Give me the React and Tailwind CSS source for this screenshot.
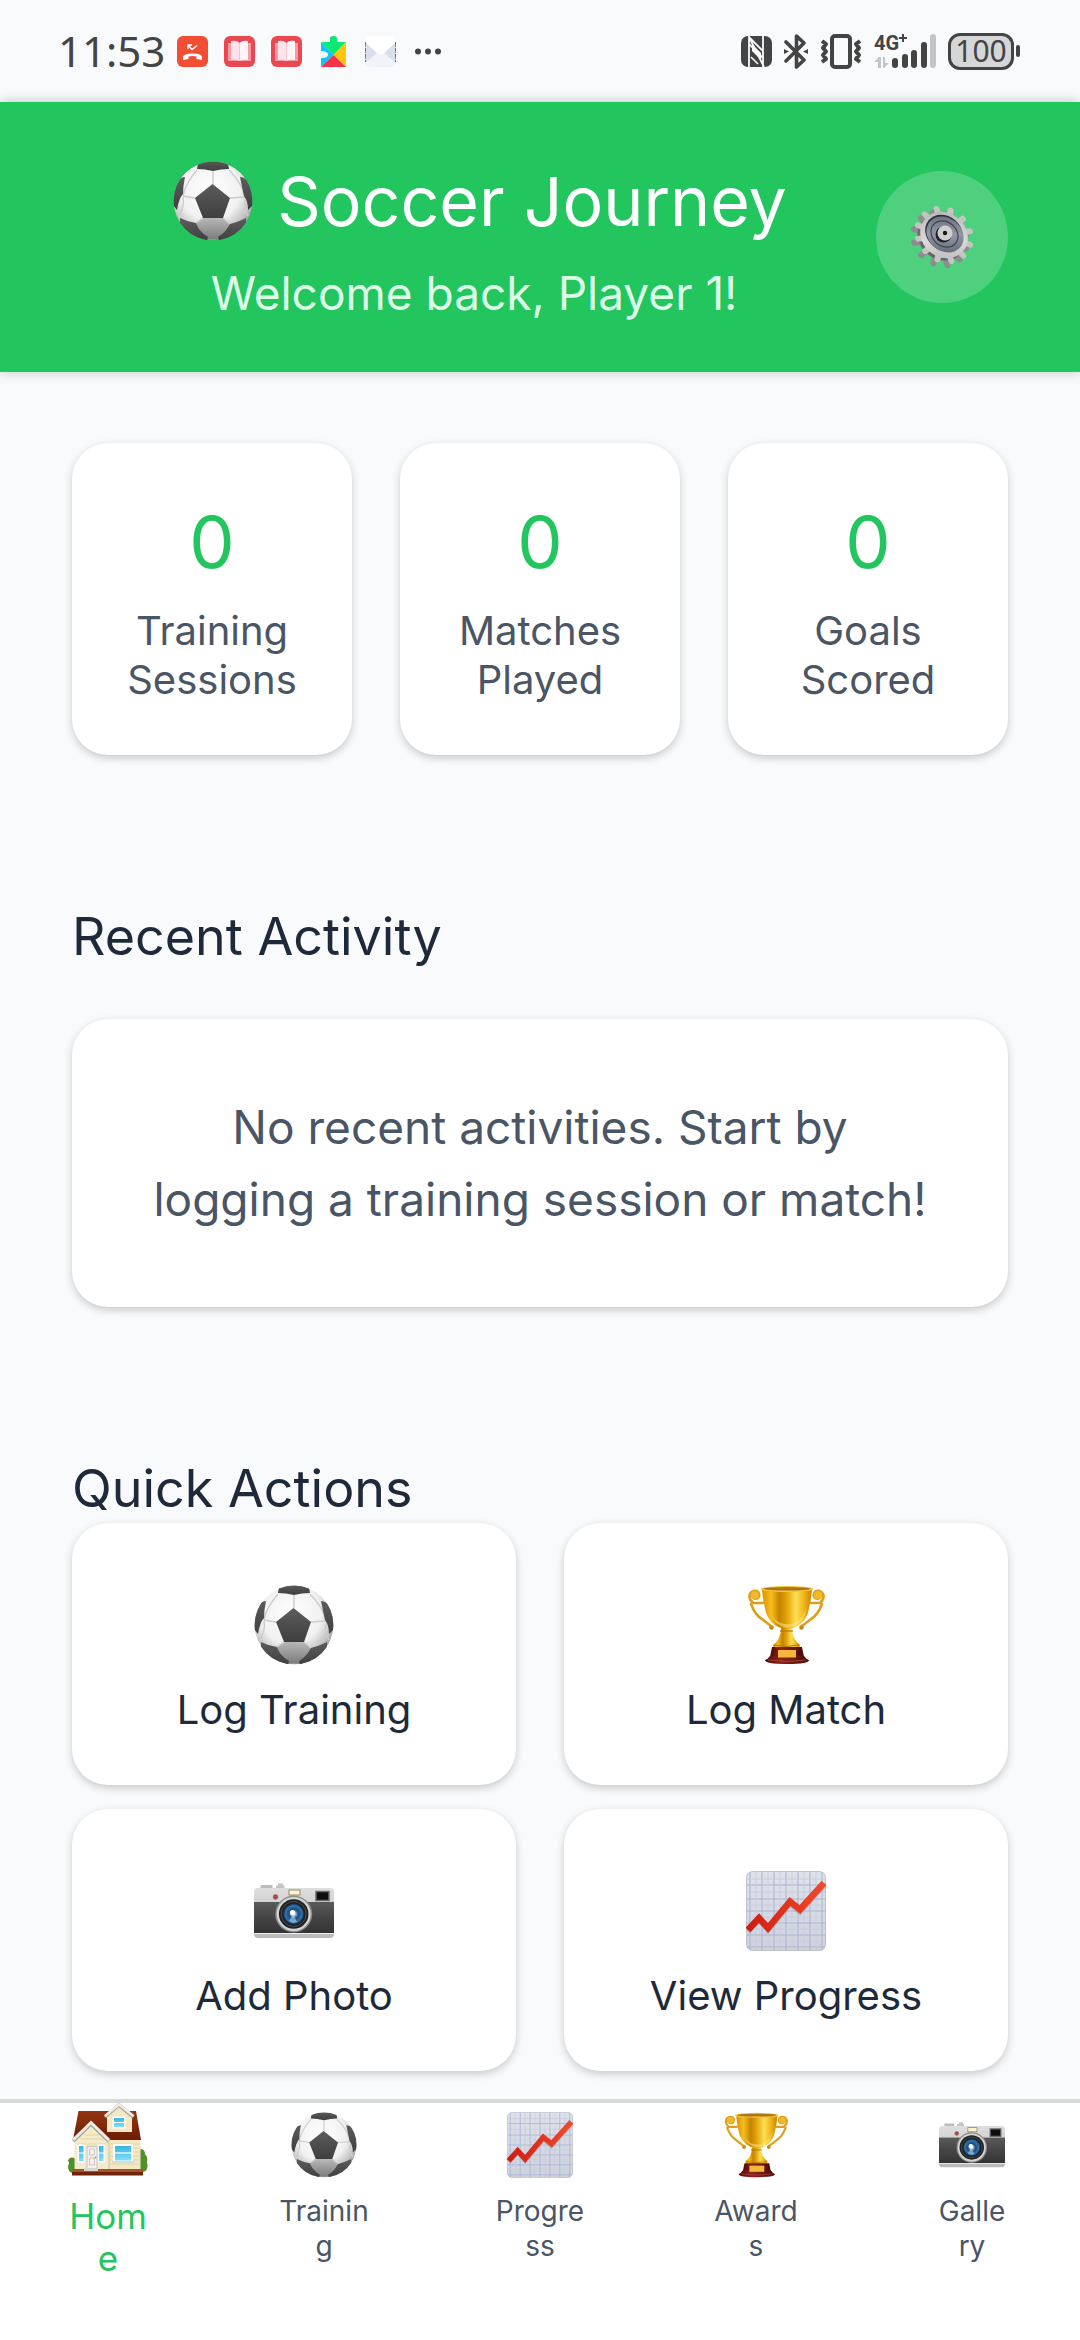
function SoccerIcon({ className }) {
  return (
    <svg viewBox="0 0 80 80" className={className} aria-hidden="true">
      <defs>
        <radialGradient id="ballSkin" cx="46%" cy="36%" r="64%">
          <stop offset="0" stopColor="#ffffff" />
          <stop offset="0.6" stopColor="#f1f1f1" />
          <stop offset="0.85" stopColor="#c2c2c2" />
          <stop offset="1" stopColor="#8c8c8c" />
        </radialGradient>
        <linearGradient id="ballPatch" x1="0" y1="0" x2="0" y2="1">
          <stop offset="0" stopColor="#5c5c5c" />
          <stop offset="1" stopColor="#3f3f3f" />
        </linearGradient>
        <linearGradient id="ballLow" x1="0" y1="0" x2="0" y2="1">
          <stop offset="0" stopColor="#b8b8b8" />
          <stop offset="1" stopColor="#7d7d7d" />
        </linearGradient>
        <clipPath id="ballClip">
          <circle cx="40" cy="40" r="39.5" />
        </clipPath>
      </defs>
      <g clipPath="url(#ballClip)">
        <circle cx="40" cy="40" r="39.5" fill="url(#ballSkin)" />
        <path d="M30 57H50L57 63L53 69L45 78H35L26 68L23 62Z" fill="url(#ballLow)" />
        <g fill="none" stroke="#cccccc" strokeWidth="1.4">
          <path d="M40 23V10M22 37L10 35M57 37L72 36M30 57L23 62M50 57L57 63" />
          <path d="M10 35Q12 23 24 9M72 35Q68 21 56 9M5 56Q12 46 10 36M75 55Q69 46 73 37" />
        </g>
        <g fill="url(#ballPatch)">
          <path d="M39.500 23L57 37L50 57H30L22 37Z" />
          <path d="M25 2Q40 -4 55 2L56 8Q48 8 40 10Q32 8 24 8Z" />
          <path d="M12 16Q10 25 10 33Q6 37 4 49L0 44Q0 28 5 20Q8 16 12 16Z" />
          <path d="M67 16Q69 26 71 35Q75 40 75 49L80 44Q80 28 75 20Q71 16 67 16Z" />
          <path d="M7 57Q15 61 23 62L26 68Q30 73 35 76L34 80Q15 76 7 64Z" />
          <path d="M73 57Q65 61 57 63L53 69Q50 73 45 76L46 80Q65 76 73 64Z" />
        </g>
      </g>
    </svg>
  );
}

function TrophyIcon({ className }) {
  return (
    <svg viewBox="0 0 80 80" className={className} aria-hidden="true">
      <defs>
        <linearGradient id="cupGold" x1="0" y1="0" x2="1" y2="0">
          <stop offset="0" stopColor="#d98f00" />
          <stop offset="0.18" stopColor="#f6bd1c" />
          <stop offset="0.35" stopColor="#c48400" />
          <stop offset="0.5" stopColor="#e5a50a" />
          <stop offset="0.68" stopColor="#ffdf55" />
          <stop offset="0.85" stopColor="#efb113" />
          <stop offset="1" stopColor="#c98300" />
        </linearGradient>
        <linearGradient id="cupBase" x1="0" y1="0" x2="1" y2="0">
          <stop offset="0" stopColor="#4c0808" />
          <stop offset="0.35" stopColor="#8f2418" />
          <stop offset="1" stopColor="#4c0808" />
        </linearGradient>
      </defs>
      <g fill="none" stroke="#dea01a" strokeWidth="2.600" strokeLinecap="round">
        <path d="M17 18H7Q2 13 4 9Q6 5 11 6Q15 9 12 13Q8 15 6 11" />
        <path d="M5 19Q9 30 16 34L25 41" />
        <path d="M65 18H74Q79 13 77 9Q75 5 70 6Q66 9 69 13Q73 15 75 11" />
        <path d="M76 19Q72 30 65 34L56 41" />
      </g>
      <circle cx="9" cy="10" r="4" fill="#f0b82c" />
      <circle cx="72" cy="10" r="4" fill="#f0b82c" />
      <circle cx="25.500" cy="42.500" r="2.300" fill="#c88a10" />
      <circle cx="55.500" cy="42.500" r="2.300" fill="#c88a10" />
      <path d="M35 43H46Q46 54 54 60Q54 63 50 63H31Q27 63 27 60Q35 54 35 43Z" fill="url(#cupGold)" />
      <path d="M28 60Q40 63 53 60" stroke="#b87900" fill="none" />
      <path d="M34 46H47" stroke="#b87900" strokeWidth="1.200" />
      <path d="M16 5H66Q65 16 62 28Q56 43 41 44Q26 43 20 28Q17 16 16 5Z" fill="url(#cupGold)" />
      <ellipse cx="41" cy="4" rx="26.500" ry="3" fill="#f7c53a" />
      <ellipse cx="41" cy="3.800" rx="23.500" ry="1.800" fill="#a97714" />
      <path d="M25 30Q33 41 46 39Q56 36 60 23Q59 41 41 43Q30 41 25 30Z" fill="#ffe98a" opacity="0.500" />
      <path d="M26 62H56L58 72H24Z" fill="url(#cupBase)" />
      <path d="M24 71H58Q60 74 63 75Q63 79 41 79Q19 79 19 75Q22 74 24 71Z" fill="url(#cupBase)" />
      <path d="M22 75Q41 78 60 75" stroke="#a94b3e" fill="none" strokeWidth="0.800" />
      <rect x="32" y="65" width="18" height="7.500" fill="#f4b73c" />
    </svg>
  );
}

function CameraIcon({ className }) {
  return (
    <svg viewBox="0 0 80 80" className={className} aria-hidden="true">
      <defs>
        <linearGradient id="camSilver" x1="0" y1="0" x2="0" y2="1">
          <stop offset="0" stopColor="#dedede" />
          <stop offset="1" stopColor="#b9b9b9" />
        </linearGradient>
        <linearGradient id="camLeather" x1="0" y1="0" x2="0" y2="1">
          <stop offset="0" stopColor="#5a5a5a" />
          <stop offset="0.500" stopColor="#454545" />
          <stop offset="1" stopColor="#333333" />
        </linearGradient>
        <radialGradient id="camGlass">
          <stop offset="0" stopColor="#ffffff" />
          <stop offset="0.200" stopColor="#8fb8dc" />
          <stop offset="0.450" stopColor="#1d4a78" />
          <stop offset="0.800" stopColor="#2f73ad" />
          <stop offset="1" stopColor="#12263c" />
        </radialGradient>
      </defs>
      <rect x="6.500" y="14" width="12" height="4" rx="1" fill="#bcbcbc" />
      <path d="M22 18V14.500H24V12.500H29V14.500H30.500V18Z" fill="#c4c4c4" />
      <rect x="0" y="17" width="80" height="50" rx="4" fill="url(#camSilver)" />
      <rect x="0" y="31" width="80" height="31" fill="url(#camLeather)" />
      <rect x="0" y="62" width="80" height="1" fill="#f1f1f1" />
      <rect x="35" y="19" width="11" height="5" fill="#fff3cf" stroke="#7b745f" strokeWidth="0.800" />
      <rect x="62" y="20.500" width="13" height="9" fill="#0e0e0e" stroke="#6b6b6b" strokeWidth="1.500" />
      <circle cx="21.500" cy="26" r="2.400" fill="#b8403c" stroke="#777777" strokeWidth="0.700" />
      <circle cx="39.700" cy="43" r="18.500" fill="#8d8d8d" />
      <circle cx="39.700" cy="43" r="17" fill="#d5d5d5" />
      <circle cx="39.700" cy="43" r="14.800" fill="#202224" />
      <circle cx="39.700" cy="43" r="12.500" fill="none" stroke="#505558" strokeWidth="0.800" />
      <circle cx="39.700" cy="43" r="10.500" fill="url(#camGlass)" />
      <path d="M39 43L43 51Q38 53 35 50Z" fill="#b7d5ee" opacity="0.600" />
      <circle cx="38.500" cy="41.500" r="2.600" fill="#ffffff" />
    </svg>
  );
}

function ChartIcon({ className }) {
  return (
    <svg viewBox="0 0 80 80" className={className} aria-hidden="true">
      <defs>
        <linearGradient id="chartPaper" x1="0" y1="0" x2="0" y2="1">
          <stop offset="0" stopColor="#dfe2e9" />
          <stop offset="1" stopColor="#cfd2db" />
        </linearGradient>
        <linearGradient id="chartLine" x1="0" y1="0" x2="1" y2="0">
          <stop offset="0" stopColor="#cf1c10" />
          <stop offset="1" stopColor="#f04a2c" />
        </linearGradient>
      </defs>
      <rect x="0.500" y="0.500" width="79" height="79" rx="6" fill="url(#chartPaper)" stroke="#b5b8c2" strokeWidth="0.800" />
      <path
        d="M4 1V79M16 1V79M28 1V79M40 1V79M52 1V79M64 1V79M76 1V79M1 14H79M1 28H79M1 40H79M1 52H79M1 64H79M1 76H79"
        stroke="#a9b5d6"
        strokeWidth="1"
      />
      <path
        d="M10 1V79M22 1V79M34 1V79M46 1V79M58 1V79M70 1V79M1 8H79M1 21H79M1 34H79M1 46H79M1 58H79M1 70H79"
        stroke="#c3cbe0"
        strokeWidth="0.800"
      />
      <path d="M2 61L13 49L22 59L44 33L54 41L78 14" fill="none" stroke="#8a8f9c" strokeWidth="5.500" opacity="0.400" />
      <path d="M2 59L13 47L22 57L44 30.500L54 38.500L78 12" fill="none" stroke="url(#chartLine)" strokeWidth="6.500" />
    </svg>
  );
}

function HouseIcon({ className }) {
  return (
    <svg viewBox="0 0 80 80" className={className} aria-hidden="true">
      <defs>
        <linearGradient id="roofTile" x1="0" y1="0" x2="0" y2="1">
          <stop offset="0" stopColor="#93360f" />
          <stop offset="1" stopColor="#6d1c05" />
        </linearGradient>
        <linearGradient id="paneSky" x1="0" y1="0" x2="0" y2="1">
          <stop offset="0" stopColor="#39b4e0" />
          <stop offset="1" stopColor="#7fe0f7" />
        </linearGradient>
      </defs>
      <path d="M7 55Q1 53 0 58Q2 60 0 63Q0 70 5 70H8Z" fill="#4f8f2c" />
      <path d="M72 46Q77 46 77 51Q80 54 79 59Q81 68 75 69H72Z" fill="#4f8f2c" />
      <rect x="6.500" y="34" width="66" height="33" fill="#f2e8c4" />
      <path d="M42 41H72M42 45H72M42 49H72M42 53H72M42 57H72M42 61H72M7 41H41M7 61H41" stroke="#ddd0a2" strokeWidth="0.800" />
      <path d="M10.500 8H68L73 37H5Z" fill="url(#roofTile)" />
      <path d="M39 13L51 3L64 13V29H39Z" fill="#f2e8c4" />
      <path d="M37 14L51 2L65.500 14" fill="none" stroke="#a9a59c" strokeWidth="3.600" />
      <path d="M37 13L51 1.500L65.500 13" fill="none" stroke="#eeece6" strokeWidth="2.400" />
      <rect x="44.500" y="13.500" width="13" height="12" fill="#ffffff" />
      <rect x="46" y="15" width="10" height="9" fill="url(#paneSky)" />
      <path d="M46 19.500H56" stroke="#ffffff" strokeWidth="1" />
      <path d="M7 38L23 22L41 38V66H7Z" fill="#f4ebca" />
      <path d="M12 36H36M16 32H31M9 41H40" stroke="#ddd0a2" strokeWidth="0.800" />
      <path d="M41 39V66" stroke="#cdbf8f" strokeWidth="1" />
      <path d="M5 38L23 20.500L41 38" fill="none" stroke="#a9a59c" strokeWidth="4" />
      <path d="M5 37L23 19.500L41 37" fill="none" stroke="#eeece6" strokeWidth="2.800" />
      <rect x="9.500" y="41.500" width="7.500" height="18" fill="#ffffff" />
      <rect x="11" y="43" width="4.500" height="15" fill="url(#paneSky)" />
      <rect x="29.500" y="41.500" width="7.500" height="18" fill="#ffffff" />
      <rect x="31" y="43" width="4.500" height="15" fill="url(#paneSky)" />
      <path d="M11 50H16M31 50H36" stroke="#ffffff" strokeWidth="1" />
      <rect x="18.500" y="43" width="11" height="22" fill="#c9c4bb" />
      <rect x="19.500" y="44" width="9" height="21" fill="#f3f0ee" />
      <path d="M21.500 46H26.500V52H21.500ZM21.500 55H26.500V62H21.500Z" fill="none" stroke="#c3bebb" strokeWidth="0.800" />
      <circle cx="27.500" cy="54.500" r="0.900" fill="#d29a2c" />
      <rect x="45" y="41" width="20" height="18" fill="#ffffff" />
      <rect x="44.500" y="58" width="22" height="2" fill="#dedbd2" />
      <rect x="47" y="43" width="16" height="14.500" fill="url(#paneSky)" />
      <path d="M47 50H63" stroke="#ffffff" strokeWidth="1.200" />
      <rect x="5" y="66" width="70" height="3" fill="#a4562a" />
      <rect x="4" y="69" width="71" height="3.500" fill="#6f2407" />
      <rect x="16" y="65" width="14" height="3" fill="#d8d4d0" />
    </svg>
  );
}

const TEETH = [0, 30, 60, 90, 120, 150, 180, 210, 240, 270, 300, 330];

function GearIcon({ className }) {
  return (
    <svg viewBox="0 0 66 66" className={className} aria-hidden="true">
      <defs>
        <linearGradient id="gearFace" x1="0" y1="0" x2="1" y2="1">
          <stop offset="0" stopColor="#b4b0b0" />
          <stop offset="0.600" stopColor="#dcd9d9" />
          <stop offset="1" stopColor="#b4b1b3" />
        </linearGradient>
        <linearGradient id="gearDish" x1="0" y1="0" x2="1" y2="1">
          <stop offset="0" stopColor="#5f6473" />
          <stop offset="0.500" stopColor="#9297a5" />
          <stop offset="1" stopColor="#555a68" />
        </linearGradient>
      </defs>
      <g stroke="#8f8c91" strokeWidth="6" strokeLinecap="round">
        {TEETH.map((a) => (
          <path key={a} d="M0 -20V-27" transform={`translate(31 35) rotate(40) scale(1.05 0.92) rotate(${a + 8})`} />
        ))}
      </g>
      <ellipse cx="32" cy="34" rx="25" ry="21" transform="rotate(40 32 34)" fill="#6a676d" />
      <g stroke="#c6c3c3" strokeWidth="6" strokeLinecap="round">
        {TEETH.map((a) => (
          <path key={a} d="M0 -20V-27" transform={`translate(35 31) rotate(40) scale(1.05 0.92) rotate(${a + 8})`} />
        ))}
      </g>
      <ellipse cx="35" cy="31" rx="25" ry="22" transform="rotate(40 35 31)" fill="url(#gearFace)" />
      <ellipse cx="35" cy="29" rx="20" ry="17" transform="rotate(40 35 29)" fill="#2e323c" />
      <ellipse cx="36" cy="30.500" rx="20" ry="16.500" transform="rotate(40 36 30.500)" fill="url(#gearDish)" />
      <ellipse cx="35.500" cy="30" rx="14.500" ry="12" transform="rotate(40 35.500 30)" fill="none" stroke="#40444f" strokeWidth="1.200" />
      <circle cx="34.500" cy="30.500" r="8" fill="#1f2128" />
      <circle cx="36" cy="29" r="7.500" fill="#d0cece" />
      <circle cx="36" cy="29" r="2.200" fill="#17181c" />
    </svg>
  );
}

function BookBadge() {
  return (
    <svg viewBox="0 0 31 31" className="size-[31px]" aria-hidden="true">
      <rect width="31" height="31" rx="6" fill="#ea4750" />
      <path d="M4 7H27V25H4Z" fill="#f79aa6" />
      <path d="M7 5Q13 4 15.500 7V25Q13 23 7 24Z" fill="#fde3ea" />
      <path d="M24 5Q18 4 15.500 7V25Q18 23 24 24Z" fill="#fff4f6" />
      <path d="M15.500 7V25" stroke="#f7c6d0" strokeWidth="1" />
    </svg>
  );
}

function StatusBar() {
  return (
    <div className="flex h-[102px] items-center justify-between bg-gray-50 pl-[58px] pr-[60px] text-[#444444]">
      <div className="flex items-center gap-4">
        <span className="-mr-1 font-['Noto_Sans'] text-[42px] leading-[48px]">11:53</span>
        <svg viewBox="0 0 31 31" className="size-[31px]" aria-hidden="true">
          <rect width="31" height="31" rx="6" fill="#f24e35" />
          <path d="M11 13V9H15M11 9L15 13.500L20 9.500" fill="none" stroke="#ffffff" strokeWidth="1.400" />
          <path d="M6 22Q5 17.500 15.500 17.500Q26 17.500 25 22V24L19.500 23V20.500Q15.500 19.500 11.500 20.500V23L6 24Z" fill="#ffffff" />
        </svg>
        <BookBadge />
        <BookBadge />
        <svg viewBox="0 0 31 31" className="size-[31px]" aria-hidden="true">
          <path d="M3 6H12V4Q11 0 15.500 0Q20 0 19 4V6H28L15.500 19Z" fill="#0ce874" />
          <path d="M3 6L15.500 19L3 31V22Q10 22 10 18.500Q10 15 3 15Z" fill="#10c4f8" />
          <path d="M28 6V31L15.500 19Z" fill="#fdc60a" />
          <path d="M3 31L15.500 19L28 31Z" fill="#f5344c" />
        </svg>
        <svg viewBox="0 0 31 31" className="size-[31px]" aria-hidden="true">
          <rect y="2" width="31" height="29" rx="5" fill="#f0f3f7" />
          <path d="M0 6L12 17L0 27ZM31 6L19 17L31 27Z" fill="#d9e0e9" />
          <path d="M0 6Q0 0 6 0H25Q31 0 31 6L19 17Q15.500 20 12 17Z" fill="#ffffff" />
          <path d="M0.500 6V26M30.500 6V26" stroke="#4f74c4" strokeDasharray="3 3" />
          <path d="M0.500 9V26M30.500 9V26" stroke="#dd6f78" strokeDasharray="2 4" />
        </svg>
        <svg viewBox="0 0 31 31" className="size-[31px]" fill="currentColor" aria-hidden="true">
          <circle cx="6" cy="15.500" r="3" />
          <circle cx="16" cy="15.500" r="3" />
          <circle cx="26" cy="15.500" r="3" />
        </svg>
      </div>
      <div className="flex items-center gap-3">
        <svg viewBox="0 0 31 31" className="size-[31px]" aria-hidden="true">
          <rect width="31" height="31" rx="7" fill="currentColor" />
          <path d="M8 31V1L22 15V31M8 8L22 22M8 1L23 31M22 0V22" fill="none" stroke="#f9fafb" strokeWidth="1.800" />
          <path d="M11 8L20 17V24L11 15Z" fill="#f9fafb" />
          <path d="M10 21L17 28" stroke="#f9fafb" strokeWidth="1.600" />
        </svg>
        <svg viewBox="0 0 24 35" className="h-[35px] w-6" fill="none" stroke="currentColor" strokeWidth="3.600" strokeLinejoin="round" aria-hidden="true">
          <path d="M2 8L20 26L12.500 33V2L20 9L2 27" strokeLinecap="round" />
          <path d="M0 15L5 17.500L0 20ZM24 15L19 17.500L24 20Z" fill="currentColor" stroke="none" />
        </svg>
        <svg viewBox="0 0 42 35" className="h-[35px] w-[42px]" fill="none" stroke="currentColor" strokeWidth="4" strokeLinejoin="round" aria-hidden="true">
          <rect x="12" y="2" width="18" height="31" rx="3" />
          <path d="M2 7L6 10L3 14L6 17.500L3 21L6 25L2 28M40 7L36 10L39 14L36 17.500L39 21L36 25L40 28" />
        </svg>
        <svg viewBox="0 -8 62 51" className="h-[51px] w-[62px]" fill="currentColor" aria-hidden="true">
          <text x="0" y="16" fontFamily="Roboto, sans-serif" fontSize="20" fontWeight="700">4G</text>
          <path d="M29 0V8M25 4H33" stroke="currentColor" strokeWidth="2" />
          <g fill="#c3c4c6">
            <path d="M0 28L5 23H7V34H4V28ZM9 23H11V29H15L10 34H9Z" />
            <rect x="56" y="0" width="6" height="34" rx="3" />
          </g>
          <rect x="18" y="24" width="6" height="10" rx="3" />
          <rect x="28" y="20" width="6" height="14" rx="3" />
          <rect x="37" y="16" width="6" height="18" rx="3" />
          <rect x="47" y="8" width="6" height="26" rx="3" />
        </svg>
        <div className="flex items-center gap-0.5">
          <span className="flex h-[37px] w-[66px] items-center justify-center rounded-xl border-3 border-current bg-[#d5d6d8] font-['Noto_Sans'] text-[30px] leading-8">
            100
          </span>
          <span className="h-3 w-1 rounded-sm bg-current" />
        </div>
      </div>
    </div>
  );
}

const CARD = "rounded-[36px] bg-white shadow-[0_3px_8px_rgba(0,0,0,0.2)]";

const STATS = [
  { value: 0, label: "Training Sessions" },
  { value: 0, label: "Matches Played" },
  { value: 0, label: "Goals Scored" },
];

const ACTIONS = [
  { Icon: SoccerIcon, label: "Log Training" },
  { Icon: TrophyIcon, label: "Log Match" },
  { Icon: CameraIcon, label: "Add Photo" },
  { Icon: ChartIcon, label: "View Progress" },
];

const TABS = [
  { Icon: HouseIcon, name: "Home", lines: ["Hom", "e"], active: true },
  { Icon: SoccerIcon, name: "Training", lines: ["Trainin", "g"] },
  { Icon: ChartIcon, name: "Progress", lines: ["Progre", "ss"] },
  { Icon: TrophyIcon, name: "Awards", lines: ["Award", "s"] },
  { Icon: CameraIcon, name: "Gallery", lines: ["Galle", "ry"] },
];

export default function App() {
  return (
    <div className="flex min-h-screen flex-col bg-gray-50 font-['Inter',sans-serif]">
      <StatusBar />
      <header className="flex items-center bg-[#22c55e] px-[72px] py-12 shadow-[0_0_12px_rgba(0,0,0,0.22)]">
        <div className="flex flex-1 flex-col items-center">
          <h1 className="flex items-center gap-6 pl-3 text-[68px] leading-[102px] text-white">
            <SoccerIcon className="size-20" />
            Soccer Journey
          </h1>
          <p className="mt-2.5 text-[46px] leading-[62px] text-green-100">Welcome back, Player 1!</p>
        </div>
        <button type="button" aria-label="Settings" className="flex size-[132px] items-center justify-center rounded-full bg-white/20">
          <GearIcon className="size-[66px]" />
        </button>
      </header>

      <main className="flex flex-col px-[72px] pt-[71px] pb-7">
        <section className="grid grid-cols-3 gap-12">
          {STATS.map((s) => (
            <div key={s.label} className={`${CARD} flex flex-col items-center px-12 py-[51px] text-center`}>
              <span className="text-[72px] leading-[96px] text-[#22c55e]">{s.value}</span>
              <span className="mt-4 text-[40px] leading-[49px] text-gray-600">{s.label}</span>
            </div>
          ))}
        </section>

        <section className="mt-[148px]">
          <h2 className="text-[52px] leading-[68px] text-gray-800">Recent Activity</h2>
          <div className={`${CARD} mt-12 p-[72px]`}>
            <p className="text-center text-[46px] leading-[72px] text-gray-600">
              No recent activities. Start by
              <br />
              logging a training session or match!
            </p>
          </div>
        </section>

        <section className="mt-[148px]">
          <h2 className="text-[52px] leading-[68px] text-gray-800">Quick Actions</h2>
          <div className="grid grid-cols-2 gap-x-12 gap-y-6">
            {ACTIONS.map(({ Icon, label }) => (
              <button key={label} type="button" className={`${CARD} flex flex-col items-center gap-5 pt-[62px] pb-[50px]`}>
                <Icon className="size-20" />
                <span className="text-[40px] leading-[50px] text-gray-800">{label}</span>
              </button>
            ))}
          </div>
        </section>
      </main>

      <nav className="mt-auto grid h-[241px] grid-cols-5 border-t-4 border-[#d6d9d8] bg-white">
        {TABS.map(({ Icon, name, lines, active }) => (
          <button
            key={name}
            type="button"
            aria-label={name}
            className={
              active
                ? "flex flex-col items-center gap-3 text-[35px] leading-[42px] text-[#22c55e]"
                : "flex flex-col items-center gap-4 pt-[9px] text-[28px] leading-[35px] text-gray-600"
            }
          >
            <Icon className={active ? "size-20" : "size-[66px]"} />
            <span>
              {lines[0]}
              <br />
              {lines[1]}
            </span>
          </button>
        ))}
      </nav>
    </div>
  );
}
